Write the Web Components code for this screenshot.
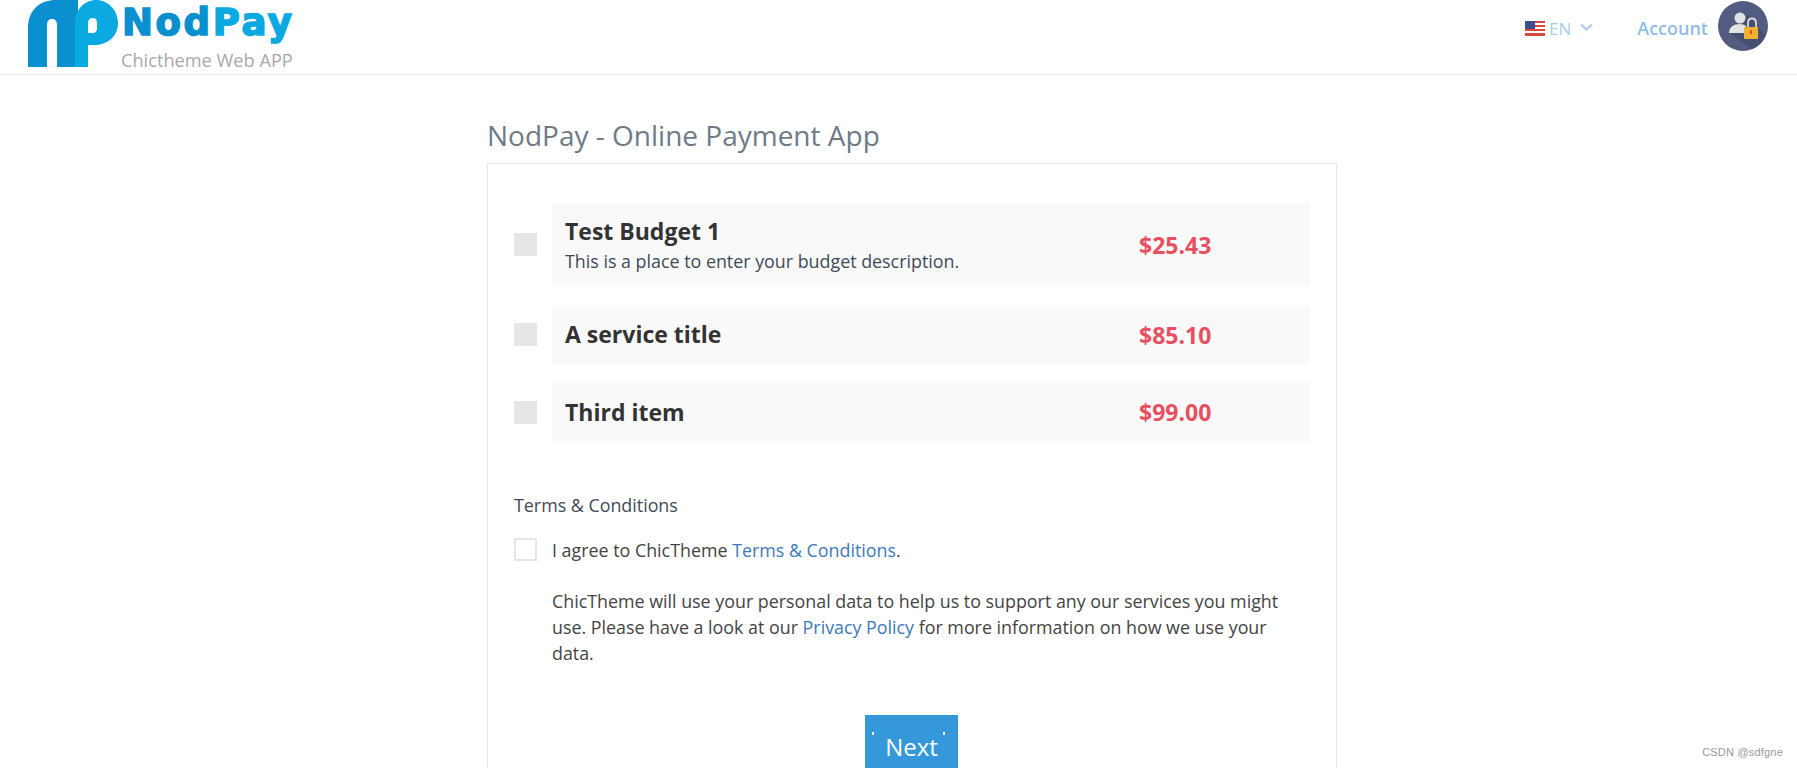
<!DOCTYPE html>
<html lang="en">
<head>
<meta charset="utf-8">
<title>NodPay</title>
<style>
    html,body{margin:0;padding:0;background:#fff;height:768px;overflow:hidden;font-family:"Open Sans",sans-serif;}
</style>
</head>
<body>
<np-header></np-header>
<np-page heading="NodPay - Online Payment App">
    <np-item name="Test Budget 1" price="$25.43" desc="This is a place to enter your budget description."></np-item>
    <np-item name="A service title" price="$85.10"></np-item>
    <np-item name="Third item" price="$99.00"></np-item>
    <np-terms></np-terms>
    <np-next>Next</np-next>
</np-page>
<np-watermark>CSDN @sdfgne</np-watermark>

<script>
const np_header = document.createElement('template');
np_header.innerHTML = `
    <style>
        :host{display:flex;height:74px;border-bottom:1px solid #e8e9ee;box-sizing:content-box;align-items:flex-start;justify-content:space-between;overflow:hidden;}
        .logo{display:flex;margin-left:28px;gap:3px;}
        .logo svg{display:block;width:91px;height:68px;}
        .nome{display:flex;flex-direction:column;width:176px;}
        .marca{font:700 37px/44px "DejaVu Sans",sans-serif;letter-spacing:2.6px;margin-top:1px;height:48px;color:#0a8fcf;-webkit-text-stroke:1.6px currentColor;white-space:nowrap;}
        .marca span{color:#0aa9e2;}
        .sub{font:400 18.2px/22px "Open Sans",sans-serif;color:#a9a9a9;white-space:nowrap;margin-left:-1px;}
        .dir{display:flex;align-items:center;margin-right:29px;height:52px;margin-top:2px;}
        .flag{display:block;width:20px;height:15px;margin-right:4px;margin-left:-1px;}
        .lang{font-size:17px;color:#a6cdf0;}
        .seta{display:block;width:13px;height:8px;margin:0 0 2px 9px;}
        .conta{font-size:18px;font-weight:600;color:#8fbdea;margin-left:44px;margin-right:10px;}
        .avatar{display:block;width:50px;height:50px;margin-top:-4px;}
    </style>
    <div class="logo">
        <svg viewBox="0 0 91 68">
            <path fill="#0a8fcf" d="M0 67V28C0 10 12 0 28 0H50V67H29V25C29 21 27 19 24 19C21 19 19 21 19 25V67Z"/>
            <path fill="#0aa9e2" d="M47 67V24C47 8 58 0 68 0C80 0 90 10 90 23C90 37 79 45 66 45H60V67Z"/>
            <path fill="#fff" d="M60 33V23C60 20 62 18 65 18C68 18 69 20 69 24V29C69 31 67 33 65 33Z"/>
        </svg>
        <div class="nome">
            <div class="marca">Nod<span>Pay</span></div>
            <div class="sub">Chictheme Web APP</div>
        </div>
    </div>
    <div class="dir">
        <svg class="flag" viewBox="0 0 20 15">
            <rect width="20" height="15" fill="#fff"/>
            <path fill="#d8483f" d="M0 0h20v2H0zM0 4h20v2H0zM0 8h20v2H0zM0 12h20v3H0z"/>
            <rect width="10" height="8" fill="#3c4f8c"/>
        </svg>
        <span class="lang">EN</span>
        <svg class="seta" viewBox="0 0 13 8"><path d="M1 1.5l5.5 5 5.5-5" fill="none" stroke="#b7cfe6" stroke-width="2.4"/></svg>
        <span class="conta">Account</span>
        <svg class="avatar" viewBox="0 0 50 50">
            <circle cx="25" cy="25" r="25" fill="#515c80"/>
            <path fill="#464f70" d="M12 32L30 14L47 34A25 25 0 0 1 34 48Z"/>
            <circle cx="22" cy="17" r="5.5" fill="#e3e3e3"/>
            <path fill="#e3e3e3" d="M11 32C11 26 16 23 22 23C25 23 27 24 28 25V32Z"/>
            <path fill="none" stroke="#d9d9d9" stroke-width="1.8" d="M30 27V22C30 16 38 16 38 22V27"/>
            <rect x="26" y="26" width="14" height="12" fill="#f0b132"/>
            <rect x="32" y="29" width="2" height="4" fill="#d9542b"/>
        </svg>
    </div>
`;
class npHeader extends HTMLElement {
    constructor() {
        super();
        this.attachShadow({ mode: 'open' });
        this.shadowRoot.appendChild(np_header.content.cloneNode(true));
    }
}
customElements.define('np-header', npHeader);

const np_page = document.createElement('template');
np_page.innerHTML = `
    <style>
        :host{display:block;width:850px;margin-left:487px;}
        h1{font-size:28px;line-height:38px;font-weight:400;color:#6e7b87;margin:41px 0 9px;}
        .card{border:1px solid #e5e8ee;border-bottom:0;padding:39px 26px 0;min-height:620px;box-sizing:border-box;}
    </style>
    <h1></h1>
    <div class="card"><slot></slot></div>
`;
class npPage extends HTMLElement {
    constructor() {
        super();
        this.attachShadow({ mode: 'open' });
        this.shadowRoot.appendChild(np_page.content.cloneNode(true));
        this.shadowRoot.querySelector('h1').textContent = this.getAttribute('heading');
    }
}
customElements.define('np-page', npPage);

const np_item = document.createElement('template');
np_item.innerHTML = `
    <style>
        :host{display:flex;align-items:center;margin-bottom:19.6px;color:#333;}
        .caixa{width:23px;height:23px;background:#e6e6e6;margin-right:15px;flex:none;}
        .linha{flex:1;display:flex;align-items:center;background:#f9f9f9;padding:12px 13px;min-height:34px;}
        .texto{width:574px;}
        .nome{font-size:23px;line-height:33px;font-weight:700;}
        .desc{font-size:17.85px;line-height:26px;color:#3f4a57;}
        .preco{font-size:23px;font-weight:700;color:#e9505f;}
    </style>
    <div class="caixa"></div>
    <div class="linha">
        <div class="texto"><div class="nome"></div><div class="desc"></div></div>
        <div class="preco"></div>
    </div>
`;
class npItem extends HTMLElement {
    constructor() {
        super();
        this.attachShadow({ mode: 'open' });
        this.shadowRoot.appendChild(np_item.content.cloneNode(true));
        let root = this.shadowRoot;
        root.querySelector('.nome').textContent = this.getAttribute('name');
        root.querySelector('.preco').textContent = this.getAttribute('price');
        if (this.getAttribute('desc')) {
            root.querySelector('.desc').textContent = this.getAttribute('desc');
        } else {
            root.querySelector('.desc').remove();
        }
    }
}
customElements.define('np-item', npItem);

const np_terms = document.createElement('template');
np_terms.innerHTML = `
    <style>
        :host{display:block;margin-top:52px;font-size:17.85px;line-height:25.6px;color:#444;}
        .titulo{margin-bottom:19px;color:#3f4a57;}
        .linha{display:flex;gap:15px;}
        .caixa{width:23px;height:23px;border:2px solid #e6e6e6;box-sizing:border-box;flex:none;}
        .corpo{flex:1;}
        p{margin:0 0 26px;width:750px;}
        a{color:#3d7ab8;text-decoration:none;}
    </style>
    <div class="titulo">Terms &amp; Conditions</div>
    <div class="linha">
        <div class="caixa"></div>
        <div class="corpo">
            <p>I agree to ChicTheme <a href="#">Terms &amp; Conditions</a>.</p>
            <p>ChicTheme will use your personal data to help us to support any our services you might use. Please have a look at our <a href="#">Privacy Policy</a> for more information on how we use your data.</p>
        </div>
    </div>
`;
class npTerms extends HTMLElement {
    constructor() {
        super();
        this.attachShadow({ mode: 'open' });
        this.shadowRoot.appendChild(np_terms.content.cloneNode(true));
    }
}
customElements.define('np-terms', npTerms);

const np_next = document.createElement('template');
np_next.innerHTML = `
    <style>
        :host{display:block;width:93px;margin:23px 0 0 351px;}
        button{position:relative;display:block;width:93px;height:62px;border:0;padding:0;background:#3498db;color:#fff;font:400 24px/57px "Open Sans",sans-serif;}
        button::before,button::after{content:"";position:absolute;top:17px;width:2px;height:3px;background:#fff;}
        button::before{left:7px;}
        button::after{right:13px;}
    </style>
    <button><slot></slot></button>
`;
class npNext extends HTMLElement {
    constructor() {
        super();
        this.attachShadow({ mode: 'open' });
        this.shadowRoot.appendChild(np_next.content.cloneNode(true));
    }
}
customElements.define('np-next', npNext);

const np_watermark = document.createElement('template');
np_watermark.innerHTML = `
    <style>
        :host{position:absolute;right:14px;top:744px;font:400 11px/16px "Liberation Sans",sans-serif;color:#999;letter-spacing:.2px;}
    </style>
    <slot></slot>
`;
class npWatermark extends HTMLElement {
    constructor() {
        super();
        this.attachShadow({ mode: 'open' });
        this.shadowRoot.appendChild(np_watermark.content.cloneNode(true));
    }
}
customElements.define('np-watermark', npWatermark);
</script>
</body>
</html>
